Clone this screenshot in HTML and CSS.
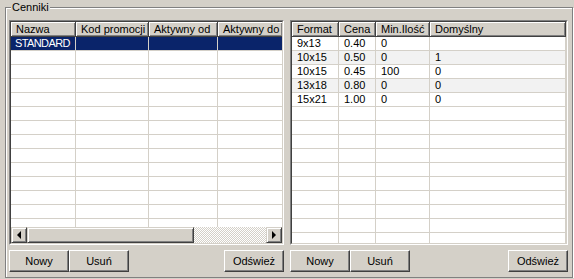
FILE: index.html
```html
<!DOCTYPE html>
<html lang="pl">
  <head>
    <meta charset="UTF-8" />
    <title>Cenniki</title>
    <link rel="stylesheet" href="styles.css">
  </head>
  <body>
    <div class="group">
      <span class="group-title">Cenniki</span>
      <div class="panels">
        <div class="panel panel-left">
          <div class="grid">
            <div class="grid-inner">
              <div class="grid-view">
                <table class="table-left">
                  <colgroup>
                    <col style="width: 65px" />
                    <col style="width: 73px" />
                    <col style="width: 69px" />
                    <col style="width: 65px" />
                    <col style="width: 116px" />
                  </colgroup>
                  <tr>
                    <th>Nazwa</th>
                    <th>Kod promocji</th>
                    <th>Aktywny od</th>
                    <th>Aktywny do</th>
                    <th></th>
                  </tr>
                  <tr class="selected">
                    <td class="focus">STANDARD</td>
                    <td></td><td></td><td></td><td></td>
                  </tr>
                  <tr><td></td><td></td><td></td><td></td><td></td></tr>
                  <tr><td></td><td></td><td></td><td></td><td></td></tr>
                  <tr><td></td><td></td><td></td><td></td><td></td></tr>
                  <tr><td></td><td></td><td></td><td></td><td></td></tr>
                  <tr><td></td><td></td><td></td><td></td><td></td></tr>
                  <tr><td></td><td></td><td></td><td></td><td></td></tr>
                  <tr><td></td><td></td><td></td><td></td><td></td></tr>
                  <tr><td></td><td></td><td></td><td></td><td></td></tr>
                  <tr><td></td><td></td><td></td><td></td><td></td></tr>
                  <tr><td></td><td></td><td></td><td></td><td></td></tr>
                  <tr><td></td><td></td><td></td><td></td><td></td></tr>
                  <tr><td></td><td></td><td></td><td></td><td></td></tr>
                  <tr><td></td><td></td><td></td><td></td><td></td></tr>
                </table>
              </div>
              <div class="hscroll">
                <div class="sb-btn"><span class="arrow-left"></span></div>
                <div class="sb-thumb"></div>
                <div class="sb-track"></div>
                <div class="sb-btn"><span class="arrow-right"></span></div>
              </div>
            </div>
          </div>
          <div class="buttons">
            <button>Nowy</button>
            <button>Usuń</button>
            <button class="refresh">Odśwież</button>
          </div>
        </div>

        <div class="panel panel-right">
          <div class="grid">
            <div class="grid-inner">
              <div class="grid-view">
                <table class="table-right">
                  <colgroup>
                    <col style="width: 47px" />
                    <col style="width: 37px" />
                    <col style="width: 54px" />
                    <col style="width: 136px" />
                  </colgroup>
                  <tr>
                    <th>Format</th>
                    <th>Cena</th>
                    <th>Min.Ilość</th>
                    <th>Domyślny</th>
                  </tr>
                  <tr><td>9x13</td><td>0.40</td><td>0</td><td></td></tr>
                  <tr class="alt"><td>10x15</td><td>0.50</td><td>0</td><td>1</td></tr>
                  <tr><td>10x15</td><td>0.45</td><td>100</td><td>0</td></tr>
                  <tr class="alt"><td>13x18</td><td>0.80</td><td>0</td><td>0</td></tr>
                  <tr><td>15x21</td><td>1.00</td><td>0</td><td>0</td></tr>
                  <tr><td></td><td></td><td></td><td></td></tr>
                  <tr><td></td><td></td><td></td><td></td></tr>
                  <tr><td></td><td></td><td></td><td></td></tr>
                  <tr><td></td><td></td><td></td><td></td></tr>
                  <tr><td></td><td></td><td></td><td></td></tr>
                  <tr><td></td><td></td><td></td><td></td></tr>
                  <tr><td></td><td></td><td></td><td></td></tr>
                  <tr><td></td><td></td><td></td><td></td></tr>
                  <tr><td></td><td></td><td></td><td></td></tr>
                  <tr><td></td><td></td><td></td><td></td></tr>
                  <tr><td></td><td></td><td></td><td></td></tr>
                </table>
              </div>
            </div>
          </div>
          <div class="buttons">
            <button>Nowy</button>
            <button>Usuń</button>
            <button class="refresh">Odśwież</button>
          </div>
        </div>
      </div>
    </div>
  </body>
</html>
```

FILE: styles.css
```css
body {
  margin: 0;
  background-color: #d4d0c8;
  font-family: "Liberation Sans", Tahoma, sans-serif;
  font-size: 11px;
  color: #000;
}

/* group box "Cenniki" */
.group {
  position: relative;
  box-sizing: border-box;
  width: 568px;
  height: 271px;
  margin: 7px 0 0 5px;
  padding: 12px 4px 5px 3px;
  border: 1px solid #808080;
  box-shadow: inset 1px 1px 0 #fff, 1px 1px 0 #fff;
}

.group-title {
  position: absolute;
  top: -7px;
  left: 5px;
  padding: 0 1px;
  line-height: 13px;
  background-color: #d4d0c8;
}

.panels {
  display: flex;
  gap: 6px;
  height: 252px;
}

.panel {
  display: flex;
  flex-direction: column;
}

.panel-left {
  width: 275px;
}

.panel-right {
  width: 278px;
}

/* sunken grid frame */
.grid {
  box-sizing: border-box;
  height: 225px;
  border: 1px solid;
  border-color: #808080 #fff #fff #808080;
}

.grid-inner {
  display: flex;
  flex-direction: column;
  box-sizing: border-box;
  height: 100%;
  border: 1px solid;
  border-color: #404040 #d4d0c8 #d4d0c8 #404040;
  background-color: #fff;
}

.grid-view {
  flex: 1;
  overflow: hidden;
}

table {
  border-collapse: separate;
  border-spacing: 0;
  table-layout: fixed;
}

.table-left {
  width: 388px;
}

.table-right {
  width: 274px;
}

th {
  height: 14px;
  padding: 0 0 0 5px;
  border-right: 1px solid #404040;
  border-bottom: 1px solid #404040;
  box-shadow: inset 1px 1px 0 #fff, inset -1px -1px 0 #808080;
  background-color: #d4d0c8;
  font-weight: normal;
  text-align: left;
  line-height: 14px;
  white-space: nowrap;
  overflow: hidden;
}

td {
  height: 13px;
  padding: 0 0 0 5px;
  border-right: 1px solid #d4d0c8;
  border-bottom: 1px solid #d4d0c8;
  line-height: 13px;
  white-space: nowrap;
  overflow: hidden;
}

tr.alt td {
  background-color: #f2f2f2;
}

tr.selected td {
  background-color: #0a246a;
  color: #fff;
}

tr.selected .focus {
  padding-left: 4px;
  letter-spacing: -0.6px;
}

/* horizontal scrollbar */
.hscroll {
  display: flex;
  flex: none;
  height: 16px;
}

.sb-btn,
.sb-thumb {
  display: flex;
  align-items: center;
  justify-content: center;
  box-sizing: border-box;
  border: 1px solid;
  border-color: #d4d0c8 #404040 #404040 #d4d0c8;
  box-shadow: inset 1px 1px 0 #fff, inset -1px -1px 0 #808080;
  background-color: #d4d0c8;
}

.sb-btn {
  width: 16px;
}

.sb-thumb {
  width: 167px;
}

.sb-track {
  flex: 1;
  background: repeating-conic-gradient(#fff 0 25%, #d4d0c8 0 50%) 0 0 / 2px 2px;
}

.arrow-left {
  width: 0;
  height: 0;
  border-top: 4px solid transparent;
  border-bottom: 4px solid transparent;
  border-right: 4px solid #000;
}

.arrow-right {
  width: 0;
  height: 0;
  border-top: 4px solid transparent;
  border-bottom: 4px solid transparent;
  border-left: 4px solid #000;
}

/* buttons under grids */
.buttons {
  display: flex;
  margin-top: 5px;
}

.buttons button {
  box-sizing: border-box;
  width: 60px;
  height: 22px;
  padding: 0;
  border: 1px solid;
  border-color: #fff #404040 #404040 #fff;
  box-shadow: inset -1px -1px 0 #808080;
  background-color: #d4d0c8;
  font-family: inherit;
  font-size: 11px;
  color: #000;
}

.buttons .refresh {
  margin-left: auto;
}
```
